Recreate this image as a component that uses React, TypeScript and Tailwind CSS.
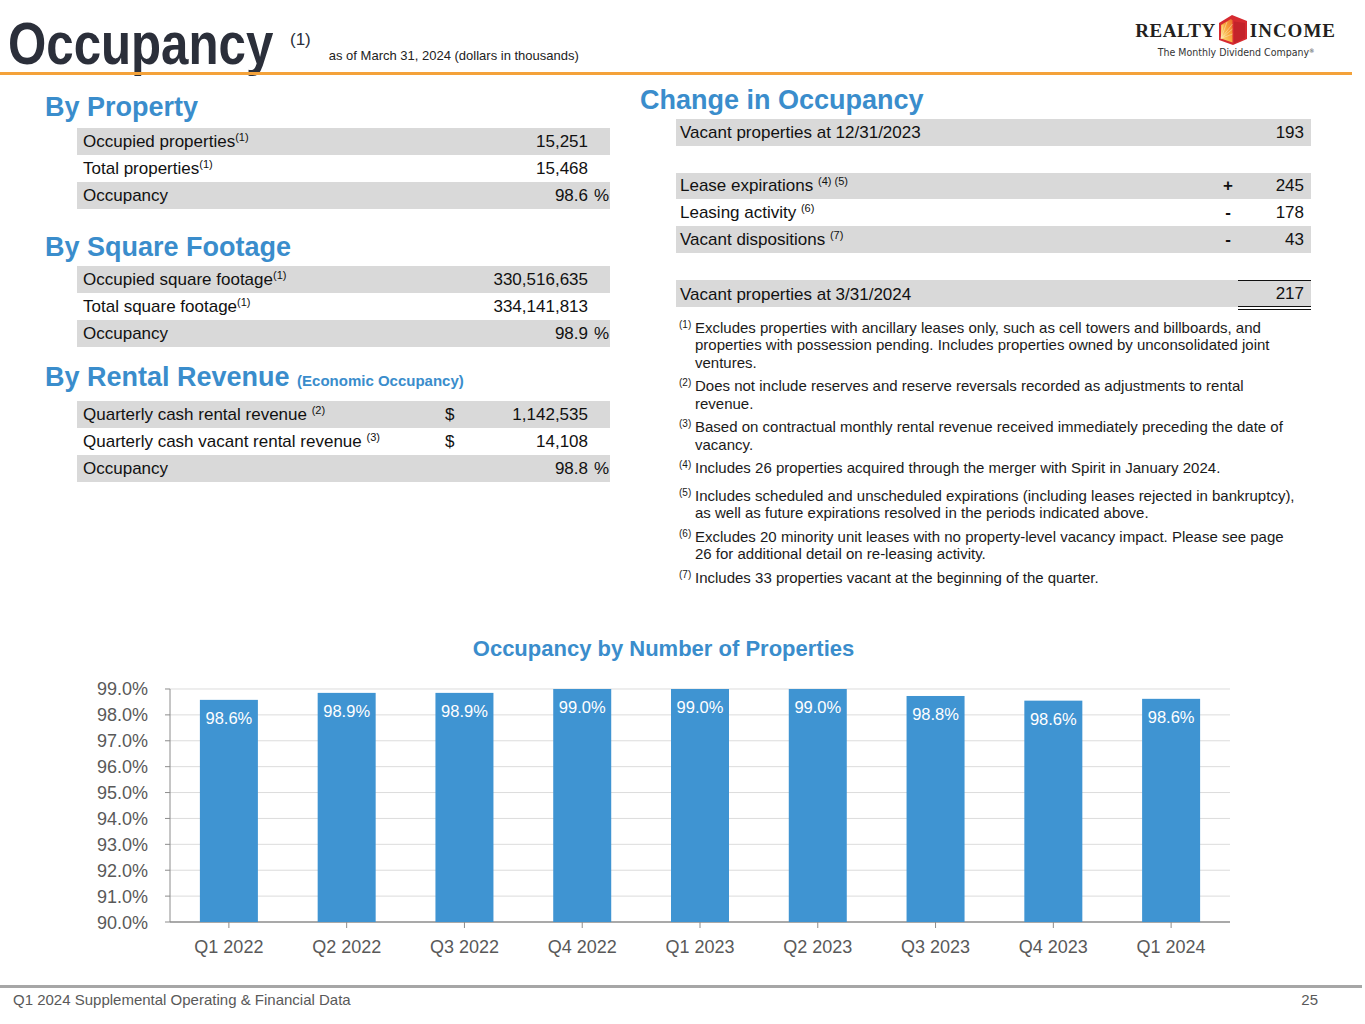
import type { ReactNode } from "react";

type LeftRow = { label: ReactNode; value: string; dollar?: boolean; pct?: boolean; shade?: boolean };
type RightRow = { label?: ReactNode; sign?: string; value?: string; shade?: boolean; total?: boolean };

const Sup = ({ children }: { children: ReactNode }) => (
  <sup className="text-[11px] -top-[6px]">{children}</sup>
);

const bars = [
  { q: "Q1 2022", label: "98.6%", v: 98.58 },
  { q: "Q2 2022", label: "98.9%", v: 98.85 },
  { q: "Q3 2022", label: "98.9%", v: 98.85 },
  { q: "Q4 2022", label: "99.0%", v: 99.0 },
  { q: "Q1 2023", label: "99.0%", v: 99.0 },
  { q: "Q2 2023", label: "99.0%", v: 99.0 },
  { q: "Q3 2023", label: "98.8%", v: 98.73 },
  { q: "Q4 2023", label: "98.6%", v: 98.55 },
  { q: "Q1 2024", label: "98.6%", v: 98.62 },
];

function LeftTable({ rows }: { rows: LeftRow[] }) {
  return (
    <div className="ml-[32px] w-[533px] text-[17px] text-[#111]">
      {rows.map((r, i) => (
        <div
          key={i}
          className={`grid grid-cols-[368px_143px_22px] h-[27px] items-center ${r.shade ? "bg-[#d9d9d9]" : ""}`}
        >
          <div className="pl-[6px] whitespace-nowrap">{r.label}</div>
          <div className="flex justify-between">
            <span>{r.dollar ? "$" : ""}</span>
            <span>{r.value}</span>
          </div>
          <div className="text-right pr-[1px]">{r.pct ? "%" : ""}</div>
        </div>
      ))}
    </div>
  );
}

function Heading({ children }: { children: ReactNode }) {
  return <h2 className="text-[27px] leading-[30px] font-bold text-[#3a8dcc] whitespace-nowrap">{children}</h2>;
}

function HouseIcon() {
  return (
    <svg width="30" height="32" viewBox="0 0 30 32">
      <defs>
        <linearGradient id="hg" x1="0" y1="1" x2="1" y2="0">
          <stop offset="0" stopColor="#fde27c" />
          <stop offset="0.55" stopColor="#f7a53c" />
          <stop offset="1" stopColor="#ec6a2b" />
        </linearGradient>
      </defs>
      <path d="M1 9 L14 1 L29 7 L29 25 L15 31 L1 26 Z" fill="#d62a30" />
      <path d="M3 11 L13 5 L14.5 6.5 L14.5 28.5 L3 24.5 Z" fill="url(#hg)" />
      <g stroke="#fff6d8" strokeWidth="0.6" opacity="0.7">
        <line x1="3" y1="24.5" x2="14.5" y2="10" />
        <line x1="3" y1="24.5" x2="14.5" y2="15" />
        <line x1="3" y1="24.5" x2="14.5" y2="20" />
        <line x1="3" y1="24.5" x2="9" y2="8" />
        <line x1="3" y1="24.5" x2="5" y2="11" />
      </g>
      <path d="M16 7.5 L27 9 L27 24 L16 29.5 Z" fill="#c4232a" />
    </svg>
  );
}

function Chart() {
  const top = 662;
  const yOf = (v: number) => 922 - top - (v - 90) * 25.889;
  const ticks = [99, 98, 97, 96, 95, 94, 93, 92, 91, 90];
  const x0 = 170;
  const x1 = 1230;
  const cw = (x1 - x0) / bars.length;
  return (
    <svg width="1365" height="320" className="block" fontFamily="'Liberation Sans', Arial, sans-serif">
      {ticks.map((t) => (
        <g key={t}>
          <line x1={x0} x2={x1} y1={yOf(t)} y2={yOf(t)} stroke={t === 90 ? "#8c8c8c" : "#dcdcdc"} strokeWidth={t === 90 ? 1.5 : 1} />
          <line x1={x0 - 5} x2={x0} y1={yOf(t)} y2={yOf(t)} stroke="#8c8c8c" />
          <text x={148} y={yOf(t) + 6.5} textAnchor="end" fontSize="18" fill="#595959">
            {t.toFixed(1)}%
          </text>
        </g>
      ))}
      <line x1={x0} x2={x0} y1={yOf(99)} y2={yOf(90)} stroke="#8c8c8c" />
      {bars.map((b, i) => {
        const cx = x0 + cw * (i + 0.5);
        const y = yOf(b.v);
        return (
          <g key={b.q}>
            <rect x={cx - 29} y={y} width="58" height={yOf(90) - y} fill="#3f94d2" />
            <text x={cx} y={y + 24} textAnchor="middle" fontSize="16.5" fill="#ffffff">
              {b.label}
            </text>
            <line x1={cx} x2={cx} y1={yOf(90)} y2={yOf(90) + 6} stroke="#8c8c8c" />
            <text x={cx} y={291} textAnchor="middle" fontSize="18" fill="#595959">
              {b.q}
            </text>
          </g>
        );
      })}
    </svg>
  );
}

export default function App() {
  const rightRows: RightRow[] = [
    { label: "Vacant properties at 12/31/2023", value: "193", shade: true },
    {},
    { label: <>Lease expirations <Sup>(4) (5)</Sup></>, sign: "+", value: "245", shade: true },
    { label: <>Leasing activity <Sup>(6)</Sup></>, sign: "-", value: "178" },
    { label: <>Vacant dispositions <Sup>(7)</Sup></>, sign: "-", value: "43", shade: true },
    {},
    { label: "Vacant properties at 3/31/2024", value: "217", shade: true, total: true },
  ];

  const notes: { n: string; text: ReactNode; extra?: boolean }[] = [
    {
      n: "(1)",
      text: (
        <>
          Excludes properties with ancillary leases only, such as cell towers and billboards, and
          <br />
          properties with possession pending. Includes properties owned by unconsolidated joint
          <br />
          ventures.
        </>
      ),
    },
    {
      n: "(2)",
      text: (
        <>
          Does not include reserves and reserve reversals recorded as adjustments to rental
          <br />
          revenue.
        </>
      ),
    },
    {
      n: "(3)",
      text: (
        <>
          Based on contractual monthly rental revenue received immediately preceding the date of
          <br />
          vacancy.
        </>
      ),
    },
    { n: "(4)", text: <>Includes 26 properties acquired through the merger with Spirit in January 2024.</> },
    {
      n: "(5)",
      extra: true,
      text: (
        <>
          Includes scheduled and unscheduled expirations (including leases rejected in bankruptcy),
          <br />
          as well as future expirations resolved in the periods indicated above.
        </>
      ),
    },
    {
      n: "(6)",
      text: (
        <>
          Excludes 20 minority unit leases with no property-level vacancy impact. Please see page
          <br />
          26 for additional detail on re-leasing activity.
        </>
      ),
    },
    { n: "(7)", text: <>Includes 33 properties vacant at the beginning of the quarter.</> },
  ];

  return (
    <div className="w-[1365px] h-[1024px] bg-white overflow-hidden font-['Liberation_Sans',Arial,sans-serif] text-[#111]">
      {/* header */}
      <div className="flex items-start h-[72px]">
        <div className="w-[266px] ml-[8px] mt-[14px]">
          <span className="inline-block origin-left scale-x-[0.82] text-[60px] leading-none font-bold text-[#2b2f3a] whitespace-nowrap">
            Occupancy
          </span>
        </div>
        <span className="ml-[16px] mt-[31px] text-[17px] leading-none text-[#2b2f3a]">(1)</span>
        <span className="ml-[18px] mt-[49px] text-[13px] leading-none text-[#222]">
          as of March 31, 2024 (dollars in thousands)
        </span>
        <div className="ml-auto mr-[29px] mt-[14px] flex flex-col items-center">
          <div className="flex items-center h-[32px]">
            <span className="font-['Liberation_Serif',serif] font-bold text-[19px] leading-none tracking-[0.5px] text-[#231f20]">
              REALTY
            </span>
            <span className="mx-[2px]">
              <HouseIcon />
            </span>
            <span className="font-['Liberation_Serif',serif] font-bold text-[19px] leading-none tracking-[1px] text-[#231f20]">
              INCOME
            </span>
          </div>
          <span className="mt-[1px] text-[10.5px] leading-none text-[#333] font-['DejaVu_Sans',sans-serif] scale-x-[0.9]">
            The Monthly Dividend Company<sup className="text-[6px]">®</sup>
          </span>
        </div>
      </div>
      <div className="relative h-[3px] w-[1352px] bg-[#f4a23a]" />

      {/* main */}
      <div className="flex h-[561px]">
        <div className="ml-[45px] w-[566px]">
          <div className="mt-[17px] mb-[6px]">
            <Heading>By Property</Heading>
          </div>
          <LeftTable
            rows={[
              { label: <>Occupied properties<Sup>(1)</Sup></>, value: "15,251", shade: true },
              { label: <>Total properties<Sup>(1)</Sup></>, value: "15,468" },
              { label: "Occupancy", value: "98.6", pct: true, shade: true },
            ]}
          />
          <div className="mt-[23px] mb-[4px]">
            <Heading>By Square Footage</Heading>
          </div>
          <LeftTable
            rows={[
              { label: <>Occupied square footage<Sup>(1)</Sup></>, value: "330,516,635", shade: true },
              { label: <>Total square footage<Sup>(1)</Sup></>, value: "334,141,813" },
              { label: "Occupancy", value: "98.9", pct: true, shade: true },
            ]}
          />
          <div className="mt-[15px] mb-[5px]">
            <Heading>
              By Rental Revenue <span className="text-[15px]">(Economic Occupancy)</span>
            </Heading>
          </div>
          <LeftTable
            rows={[
              { label: <>Quarterly cash rental revenue <Sup>(2)</Sup></>, value: "1,142,535", dollar: true, shade: true },
              { label: <>Quarterly cash vacant rental revenue <Sup>(3)</Sup></>, value: "14,108", dollar: true },
              { label: "Occupancy", value: "98.8", pct: true, shade: true },
            ]}
          />
        </div>

        <div className="ml-[29px] w-[680px]">
          <div className="mt-[10px] mb-[4px]">
            <Heading>Change in Occupancy</Heading>
          </div>
          <div className="ml-[36px] w-[635px] text-[17px]">
            {rightRows.map((r, i) => (
              <div
                key={i}
                className={`grid grid-cols-[1fr_30px_73px] h-[26.8px] items-center ${r.shade ? "bg-[#d9d9d9]" : ""}`}
              >
                <div className="pl-[4px] whitespace-nowrap">{r.label}</div>
                <div className="pl-[10px] text-center font-bold">{r.sign}</div>
                {r.total ? (
                  <div className="h-full flex items-center justify-end pr-[7px] border-t border-b-[4px] border-double border-[#111]">
                    {r.value}
                  </div>
                ) : (
                  <div className="text-right pr-[7px]">{r.value}</div>
                )}
              </div>
            ))}
          </div>
          <div className="ml-[39px] mt-[12px] text-[15px] leading-[17.5px] text-[#1a1a1a]">
            {notes.map((n) => (
              <div key={n.n} className={`flex ${n.extra ? "mt-[10px]" : "mt-[6px] first:mt-0"}`}>
                <span className="w-[16px] shrink-0 text-[10px] leading-[12px]">{n.n}</span>
                <span className="whitespace-nowrap">{n.text}</span>
              </div>
            ))}
          </div>
        </div>
      </div>

      {/* chart */}
      <div className="w-[1327px] h-[26px] text-center text-[22px] leading-[26px] font-bold text-[#3a8dcc]">
        Occupancy by Number of Properties
      </div>
      <Chart />

      {/* footer */}
      <div className="mt-[3px] h-[3px] w-[1362px] bg-[#a6a6a6]" />
      <div className="mt-[3px] flex justify-between pl-[13px] pr-[47px] text-[15px] leading-[18px] text-[#595959]">
        <span>Q1 2024 Supplemental Operating &amp; Financial Data</span>
        <span>25</span>
      </div>
    </div>
  );
}
